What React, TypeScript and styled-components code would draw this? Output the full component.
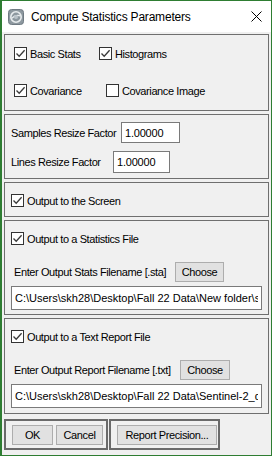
import React from 'react';
import styled, { createGlobalStyle } from 'styled-components';

const GlobalStyle = createGlobalStyle`
  html, body {
    margin: 0;
    padding: 0;
    background: #ffffff;
  }
  body {
    font-family: 'Liberation Sans', Arial, sans-serif;
    font-size: 11px;
    letter-spacing: -0.4px;
    color: #000;
  }
`;

interface CheckItemProps {
  label: string;
  checked?: boolean;
  width?: number;
}

const CheckItem = (props: CheckItemProps) => (
  <CheckWrap $width={props.width}>
    <CheckBox>
      {props.checked && (
        <svg width="11" height="11" viewBox="0 0 11 11">
          <path d="M1.5 5.5 L4.2 8.3 L9.6 2.2" fill="none" stroke="#3a3a3a" strokeWidth="1.3" />
        </svg>
      )}
    </CheckBox>
    <CheckLabel>{props.label}</CheckLabel>
  </CheckWrap>
);

const App = () => {
  return (
    <>
      <GlobalStyle />
      <Window>
        <TitleBar>
          <AppIcon>
            <svg width="16" height="16" viewBox="0 0 16 16">
              <rect x="0.5" y="0.5" width="15" height="15" rx="3" fill="#8d989f" stroke="#6f7a82" />
              <circle cx="8" cy="8" r="5.2" fill="none" stroke="#e8ecee" strokeWidth="1.6" />
              <path d="M3.5 9.5 Q8 5 12.5 7" fill="none" stroke="#e8ecee" strokeWidth="1.2" />
              <circle cx="8" cy="8" r="2" fill="#b9c2c8" />
            </svg>
          </AppIcon>
          <TitleText>Compute Statistics Parameters</TitleText>
          <CloseGlyph>
            <svg width="11" height="11" viewBox="0 0 11 11">
              <path d="M0.5 0.5 L10.5 10.5 M10.5 0.5 L0.5 10.5" stroke="#000" strokeWidth="1" />
            </svg>
          </CloseGlyph>
        </TitleBar>

        <Body>
          <Panel $height={77}>
            <StatsGrid>
              <CheckRow>
                <CheckItem label="Basic Stats" checked width={85} />
                <CheckItem label="Histograms" checked />
              </CheckRow>
              <CheckRow>
                <CheckItem label="Covariance" checked width={92} />
                <CheckItem label="Covariance Image" />
              </CheckRow>
            </StatsGrid>
          </Panel>

          <Panel $height={65}>
            <ResizeList>
              <FieldRow>
                <FieldLabel $width={110}>Samples Resize Factor</FieldLabel>
                <NumberBox $width={59} $height={21} readOnly value="1.00000" />
              </FieldRow>
              <FieldRow>
                <FieldLabel $width={102}>Lines Resize Factor</FieldLabel>
                <NumberBox $width={57} $height={22} readOnly value="1.00000" />
              </FieldRow>
            </ResizeList>
          </Panel>

          <Panel $height={35}>
            <PanelHead>
              <CheckItem label="Output to the Screen" checked />
            </PanelHead>
          </Panel>

          <Panel $height={95}>
            <FileSection>
              <CheckItem label="Output to a Statistics File" checked />
              <ChooseRow>
                <FieldLabel $width={161}>Enter Output Stats Filename [.sta]</FieldLabel>
                <Button $width={49}>Choose</Button>
              </ChooseRow>
              <PathBox readOnly value={'C:\\Users\\skh28\\Desktop\\Fall 22 Data\\New folder\\stats.sta'} />
            </FileSection>
          </Panel>

          <Panel $height={96}>
            <FileSection>
              <CheckItem label="Output to a Text Report File" checked />
              <ChooseRow>
                <FieldLabel $width={166}>Enter Output Report Filename [.txt]</FieldLabel>
                <Button $width={50}>Choose</Button>
              </ChooseRow>
              <PathBox readOnly value={'C:\\Users\\skh28\\Desktop\\Fall 22 Data\\Sentinel-2_data_report.txt'} />
            </FileSection>
          </Panel>

          <ButtonBar>
            <ButtonGroup $width={104}>
              <Button $width={41}>OK</Button>
              <Button $width={47}>Cancel</Button>
            </ButtonGroup>
            <ButtonGroup $width={111}>
              <Button $width={100}>Report Precision...</Button>
            </ButtonGroup>
          </ButtonBar>
        </Body>
      </Window>
    </>
  );
};

const Window = styled.div`
  width: 272px;
  height: 456px;
  box-sizing: border-box;
  border: 1px solid #2e7d32;
  border-left-width: 2px;
  background: #f0f0f0;
  display: flex;
  flex-direction: column;
  overflow: hidden;
`;

const TitleBar = styled.div`
  height: 31px;
  flex-shrink: 0;
  background: #ffffff;
  display: flex;
  align-items: center;
  padding-left: 6px;
`;

const AppIcon = styled.div`
  width: 16px;
  height: 16px;
  display: flex;
`;

const TitleText = styled.div`
  margin-left: 7px;
  font-size: 12px;
  letter-spacing: -0.2px;
  flex: 1;
`;

const CloseGlyph = styled.div`
  width: 11px;
  height: 11px;
  display: flex;
  margin-right: 9px;
`;

const Body = styled.div`
  flex: 1;
  display: flex;
  flex-direction: column;
  gap: 3px;
  padding: 2px 2px 0 2px;
`;

const Panel = styled.div<{ $height: number }>`
  height: ${(p) => p.$height}px;
  box-sizing: border-box;
  border: 1px solid #6f6f6f;
  flex-shrink: 0;
`;

const StatsGrid = styled.div`
  display: flex;
  flex-direction: column;
  gap: 24px;
  padding: 12px 0 0 9px;
`;

const CheckRow = styled.div`
  display: flex;
  align-items: center;
`;

const CheckWrap = styled.div<{ $width?: number }>`
  display: flex;
  align-items: center;
  gap: 3px;
  width: ${(p) => (p.$width ? `${p.$width}px` : 'auto')};
`;

const CheckBox = styled.div`
  width: 13px;
  height: 13px;
  box-sizing: border-box;
  border: 1px solid #333333;
  background: #ffffff;
  display: flex;
  align-items: center;
  justify-content: center;
  flex-shrink: 0;
`;

const CheckLabel = styled.span`
  font-size: 11px;
  white-space: nowrap;
`;

const ResizeList = styled.div`
  display: flex;
  flex-direction: column;
  gap: 8px;
  padding: 7px 0 0 6px;
`;

const FieldRow = styled.div`
  display: flex;
  align-items: center;
`;

const FieldLabel = styled.span<{ $width?: number }>`
  font-size: 11px;
  white-space: nowrap;
  width: ${(p) => (p.$width ? `${p.$width}px` : 'auto')};
  flex-shrink: 0;
`;

const NumberBox = styled.input<{ $width: number; $height: number }>`
  width: ${(p) => p.$width}px;
  height: ${(p) => p.$height}px;
  box-sizing: border-box;
  border: 1px solid #7a7a7a;
  background: #ffffff;
  font-family: 'Liberation Sans', Arial, sans-serif;
  font-size: 11px;
  letter-spacing: -0.2px;
  color: #000;
  padding: 0 3px;
  outline: none;
`;

const PanelHead = styled.div`
  padding: 11px 0 0 6px;
`;

const FileSection = styled.div`
  display: flex;
  flex-direction: column;
  padding: 11px 5px 0 6px;
`;

const ChooseRow = styled.div`
  display: flex;
  align-items: center;
  margin: 17px 0 0 3px;
`;

const PathBox = styled.input`
  margin-top: 4px;
  width: 251px;
  height: 24px;
  box-sizing: border-box;
  border: 1px solid #7a7a7a;
  background: #ffffff;
  font-family: 'Liberation Sans', Arial, sans-serif;
  font-size: 11px;
  letter-spacing: 0;
  color: #000;
  padding: 0 3px;
  outline: none;
`;

const Button = styled.div<{ $width: number }>`
  width: ${(p) => p.$width}px;
  height: 20px;
  box-sizing: border-box;
  border: 1px solid #adadad;
  background: #e1e1e1;
  display: flex;
  align-items: center;
  justify-content: center;
  font-size: 11px;
  white-space: nowrap;
  flex-shrink: 0;
`;

const ButtonBar = styled.div`
  display: flex;
  gap: 1px;
  margin-top: 2px;
`;

const ButtonGroup = styled.div<{ $width: number }>`
  width: ${(p) => p.$width}px;
  height: 31px;
  box-sizing: border-box;
  border: 2px solid #6a6a6a;
  display: flex;
  align-items: center;
  gap: 3px;
  padding-left: 6px;
`;

export default App;
